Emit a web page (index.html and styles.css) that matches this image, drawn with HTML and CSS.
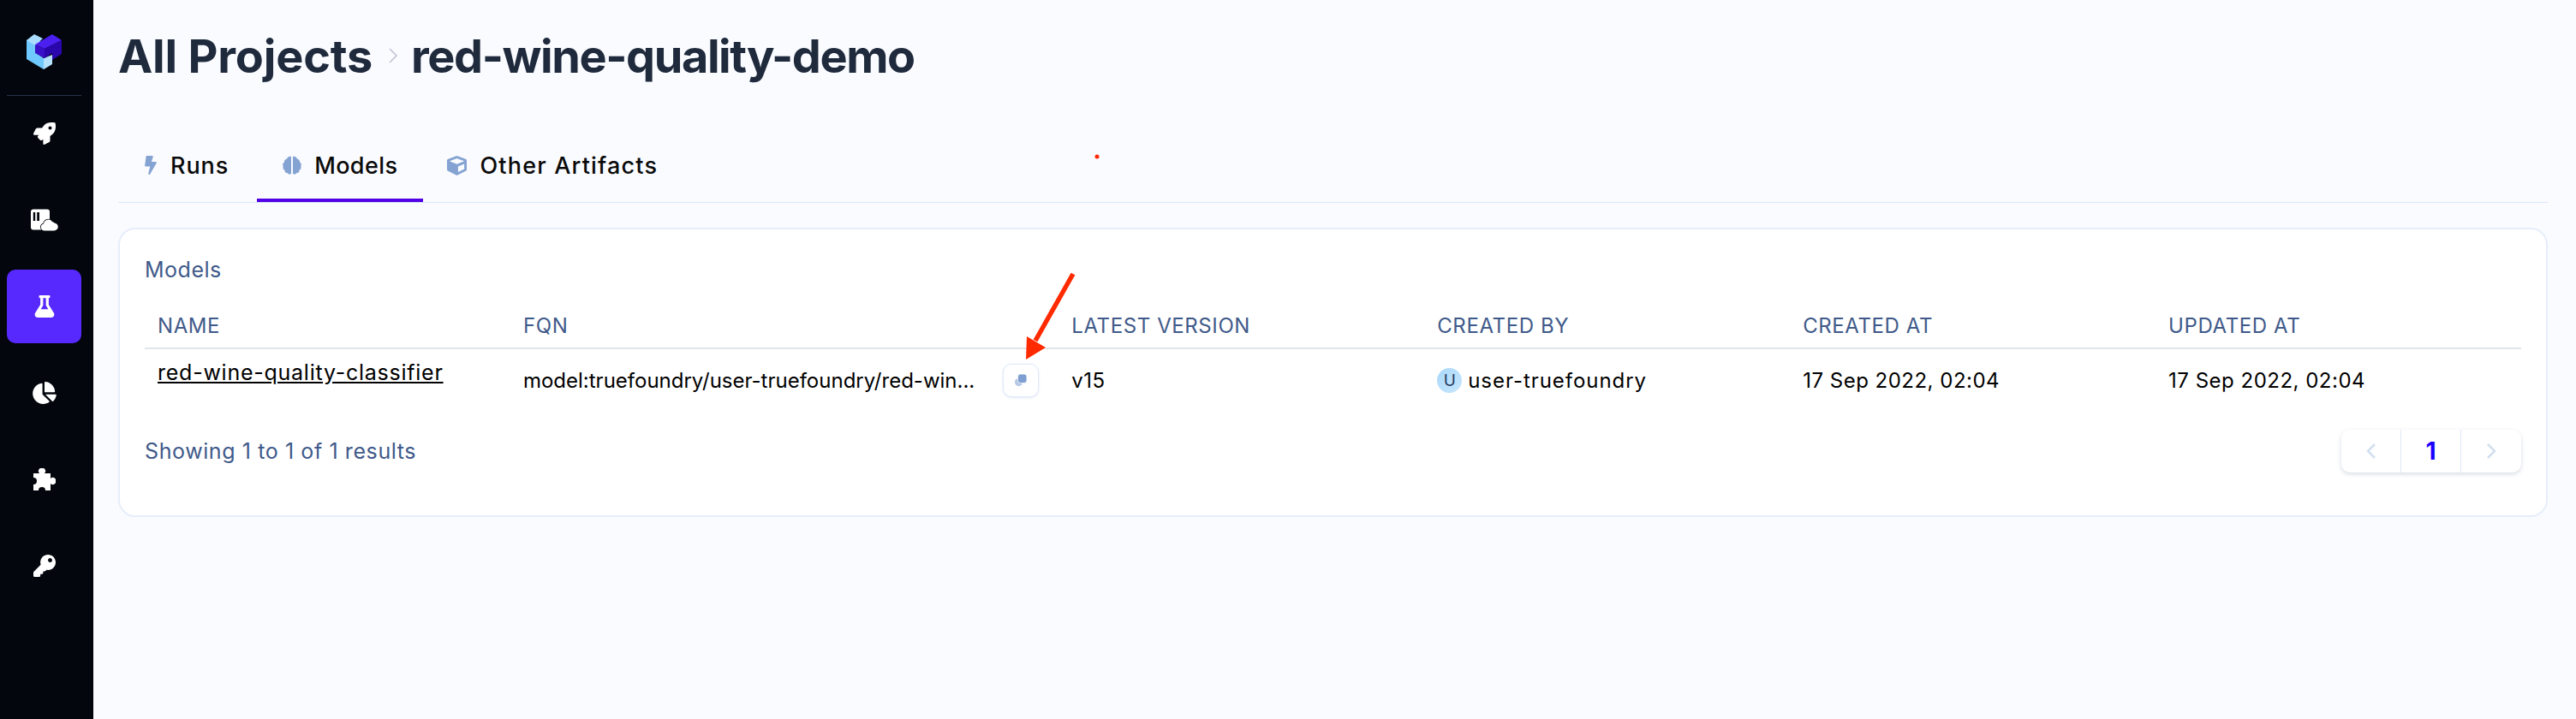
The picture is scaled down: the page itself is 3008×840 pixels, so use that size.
FILE: index.html
```html
<!DOCTYPE html>
<html lang="en">
<head>
  <meta charset="UTF-8">
  <title>red-wine-quality-demo | Models</title>
  <link rel="stylesheet" href="styles.css">
</head>
<body>
  <nav class="side-nav">
    <div class="side-logo">
      <svg width="41" height="41" viewBox="0 0 41 41">
        <path fill="#6fc8ff" d="M0 7 L0 29 L20 41 L20 28 L10 21 L10 14 L18 10 L10 3 Z"/>
        <path fill="#a9dcff" d="M0 7 L9 0 L19 5 L10 13 Z"/>
        <path fill="#b5e2ff" d="M20 28 L20 41 L30 35 L30 24 Z"/>
        <path fill="#4a1ff0" d="M10 12 L30 0 L41 7 L21 17 Z"/>
        <path fill="#3810c8" d="M10 12 L21 17 L21 28 L10 22 Z"/>
        <path fill="#2a06ad" d="M21 17 L41 7 L41 23 L30 30 L30 22 L21 28 Z"/>
      </svg>
    </div>
    <div class="side-divider"></div>
    <ul class="side-items">
      <li class="side-item">
        <svg class="side-icon" viewBox="0 0 512 512"><path d="M505.12 19.09c-1.19-5.53-6.66-11-12.21-12.19C460.72 0 435.51 0 410.41 0 307.18 0 245.27 55.2 199.05 128H94.84c-16.35.02-35.56 11.88-42.89 26.48L2.52 253.3A28.4 28.4 0 0 0 0 264a24 24 0 0 0 24 24h103.81l-22.47 22.47c-11.37 11.36-13 32.26 0 45.25l50.9 50.9c11.16 11.19 32.16 13.16 45.28 0l22.47-22.47V488a24 24 0 0 0 24.01 24 28.56 28.56 0 0 0 10.7-2.52l98.73-49.39c14.63-7.3 26.51-26.5 26.51-42.86V312.8c72.6-46.31 128.03-108.41 128.03-211.1.02-25.2.02-50.4-6.94-82.61zM384.04 168a40 40 0 1 1 40.01-40 40.02 40.02 0 0 1-40.01 40z"/></svg>
      </li>
      <li class="side-item">
        <svg class="side-icon side-icon-wide" viewBox="0 0 32 25">
          <path fill-rule="evenodd" d="M3 0h16a3 3 0 0 1 3 3v18a3 3 0 0 1-3 3H3a3 3 0 0 1-3-3V3a3 3 0 0 1 3-3zM2.800 3.500v10h2.400v-10zM7.200 3.500v10h2.800v-10z"/>
          <path class="cloud" d="M16 25a4 4 0 0 1-1-7.900A5.500 5.500 0 0 1 25 14.500a4.500 4.500 0 0 1 2.500 1.500A4.500 4.500 0 0 1 27 25z"/>
        </svg>
      </li>
      <li class="side-item is-active">
        <svg class="side-icon" viewBox="0 0 448 512"><path d="M437.2 403.5L320 215V64h8c13.3 0 24-10.7 24-24V24c0-13.3-10.7-24-24-24H120c-13.3 0-24 10.700-24 24v16c0 13.3 10.700 24 24 24h8v151L10.800 403.500C-18.500 450.600 15.300 512 70.900 512h306.200c55.700 0 89.400-61.500 60.100-108.500zM137.900 320l48.200-77.600c3.700-5.200 5.800-11.600 5.800-18.400V64h64v160c0 6.900 2.200 13.200 5.800 18.400l48.200 77.600h-172z"/></svg>
      </li>
      <li class="side-item">
        <svg class="side-icon side-icon-pie" viewBox="0 0 544 512"><path d="M527.79 288H290.5l158.03 158.03c6.04 6.04 15.98 6.53 22.19.68 38.7-36.46 65.32-85.61 73.13-140.86 1.34-9.46-6.51-17.85-16.06-17.85zm-15.83-64.8C503.72 103.74 408.26 8.28 288.8.04 279.68-.59 272 7.1 272 16.24V240h223.77c9.14 0 16.82-7.68 16.19-16.8zM224 288V50.71c0-9.55-8.39-17.4-17.84-16.06C86.99 51.49-4.1 155.6.14 280.37 4.5 408.51 114.83 513.59 243.03 511.98c50.4-.63 96.97-16.87 135.26-44.03 7.9-5.6 8.42-17.23 1.57-24.08L224 288z"/></svg>
      </li>
      <li class="side-item">
        <svg class="side-icon" viewBox="0 0 26 26"><path d="M0 6H7A4 4 0 1 1 13 6H20V12A4 4 0 1 1 20 18V26H14A4 4 0 1 0 6 26H0V19A4 4 0 1 0 0 11Z"/></svg>
      </li>
      <li class="side-item">
        <svg class="side-icon" viewBox="0 0 512 512"><path d="M512 176.001C512 273.203 433.202 352 336 352c-11.22 0-22.19-1.062-32.827-3.069l-24.012 27.014A23.999 23.999 0 0 1 261.223 384H224v40c0 13.255-10.745 24-24 24h-40v40c0 13.255-10.745 24-24 24H24c-13.255 0-24-10.745-24-24v-78.059c0-6.365 2.529-12.47 7.029-16.971l161.802-161.802C163.108 213.814 160 195.271 160 176 160 78.798 238.797.001 335.999 0 433.488-.001 512 78.511 512 176.001zM336 128c0 26.51 21.49 48 48 48s48-21.49 48-48-21.49-48-48-48-48 21.49-48 48z"/></svg>
      </li>
    </ul>
  </nav>

  <main class="content">
    <div class="crumbs">
      <h1>All Projects</h1>
      <svg class="crumb-sep" width="12" height="20" viewBox="0 0 12 20"><path d="M2 2l8 8-8 8" fill="none" stroke="#bcc3d0" stroke-width="1.500"/></svg>
      <h1 class="crumb-current">red-wine-quality-demo</h1>
    </div>

    <div class="tabs">
      <a class="tab tab-runs">
        <svg class="tab-icon" width="16" height="22" viewBox="0 0 320 512"><path d="M296 160H180.6l42.6-129.8C227.2 15 215.7 0 200 0H56C44 0 33.8 8.900 32.200 20.800l-32 240C-1.700 275.200 9.500 288 24 288h118.700L96.600 482.500c-3.600 15.200 8 29.500 23.300 29.500 8.400 0 16.400-4.400 20.800-12l176-304c9.300-15.900-2.200-36-20.700-36z"/></svg>
        Runs
      </a>
      <a class="tab is-current">
        <svg class="tab-icon" width="22" height="22" viewBox="0 0 22 22"><path d="M10 1v20c-1.500 1-3.600.7-4.400-1-1.900.2-3.300-1.300-3.100-3.200C.7 15.900-.2 13.800.8 12.300-.3 10.600.3 8.500 2 7.500 1.700 5.600 3 3.900 4.900 3.700 5.500 1.400 8.300.1 10 1z"/><path d="M12 1v20c1.500 1 3.600.7 4.400-1 1.900.2 3.300-1.300 3.100-3.200 1.800-.9 2.700-3 1.700-4.500 1.100-1.700.5-3.800-1.200-4.800.3-1.900-1-3.600-2.900-3.800C16.500 1.400 13.700.1 12 1z"/></svg>
        Models
      </a>
      <a class="tab tab-artifacts">
        <svg class="tab-icon" width="23" height="23" viewBox="0 0 512 512"><path d="M239.100 6.300l-208 78c-18.700 7-31.100 25-31.100 45v225.100c0 18.200 10.300 34.800 26.500 42.900l208 104c13.500 6.800 29.400 6.800 42.900 0l208-104c16.300-8.100 26.500-24.800 26.500-42.900V129.300c0-20-12.400-37.900-31.100-44.900l-208-78C262 2.200 250 2.200 239.100 6.300zM256 68.400l192 72v1.100l-192 78-192-78v-1.100l192-72zm32 356V275.500l160-65v133.900l-160 80z"/></svg>
        Other Artifacts
      </a>
    </div>

    <section class="card">
      <div class="card-title">Models</div>
      <div class="grid-row grid-head">
        <div class="cell">NAME</div>
        <div class="cell">FQN</div>
        <div class="cell">LATEST VERSION</div>
        <div class="cell">CREATED BY</div>
        <div class="cell">CREATED AT</div>
        <div class="cell">UPDATED AT</div>
      </div>
      <div class="grid-row grid-body">
        <div class="cell name-cell"><a class="model-link">red-wine-quality-classifier</a></div>
        <div class="cell fqn-cell">
          <span class="fqn-text">model:truefoundry/user-truefoundry/red-win...</span>
          <button class="copy-btn">
            <svg width="14" height="14" viewBox="0 0 14 14"><circle cx="4.500" cy="9.500" r="4.500" fill="#b4c7e4"/><rect x="3.500" y="0" width="10.500" height="10.500" rx="3" fill="#7f9fd2" stroke="#fff" stroke-width="0.800"/></svg>
          </button>
        </div>
        <div class="cell">v15</div>
        <div class="cell user-cell"><span class="avatar">U</span><span class="user-name">user-truefoundry</span></div>
        <div class="cell">17 Sep 2022, 02:04</div>
        <div class="cell">17 Sep 2022, 02:04</div>
      </div>
      <div class="card-foot">
        <span class="results">Showing 1 to 1 of 1 results</span>
        <div class="pager">
          <span class="pager-cell">
            <svg width="12" height="20" viewBox="0 0 12 20"><path d="M10 2l-8 8 8 8" fill="none" stroke="#d3dff0" stroke-width="2.500"/></svg>
          </span>
          <span class="pager-cell pager-num">1</span>
          <span class="pager-cell">
            <svg width="12" height="20" viewBox="0 0 12 20"><path d="M2 2l8 8-8 8" fill="none" stroke="#d3dff0" stroke-width="2.500"/></svg>
          </span>
        </div>
      </div>
    </section>
  </main>

  <!-- red annotation drawn over the page -->
  <svg class="annotation" width="3008" height="840" viewBox="0 0 3008 840">
    <circle cx="1281" cy="183" r="2.500" fill="#ff2a00"/>
    <path d="M1253 320 L1209 398" stroke="#ff2a00" stroke-width="5.500" fill="none"/>
    <path d="M1198 420 L1199 393 L1221 406 Z" fill="#ff2a00"/>
  </svg>
</body>
</html>
```

FILE: styles.css
```css
:root {
  --text-dark: #1f2a3c;
  --text-muted: #3f5a8a;
  --icon-blue: #84a3d3;
  --line-blue: #d5e5fa;
  --line-grey: #e1e4ea;
}
* {
  box-sizing: border-box;
}
body {
  margin: 0;
  width: 3008px;
  height: 840px;
  overflow: hidden;
  display: flex;
  background: #fafbff;
  color: #000;
  font-family: 'Inter', 'Liberation Sans', sans-serif;
}
.side-nav {
  width: 109px;
  flex-shrink: 0;
  background: #03060d;
  padding: 40px 14px 0 8px;
}
.side-logo {
  height: 41px;
  display: flex;
  justify-content: center;
}
.side-divider {
  height: 1px;
  margin-top: 30px;
  background: #26344a;
}
.side-items {
  list-style: none;
  margin: 1px 0 0 0;
  padding: 0;
  display: flex;
  flex-direction: column;
  gap: 15px;
}
.side-item {
  height: 86px;
  border-radius: 10px;
  display: flex;
  align-items: center;
  justify-content: center;
}
.side-item.is-active {
  background: #5729ff;
}
.side-icon {
  width: 26px;
  height: 26px;
  fill: #fff;
}
.side-icon-wide {
  width: 32px;
}
.side-icon-pie {
  width: 28px;
}
.cloud {
  stroke: #03060d;
  stroke-width: 1.6px;
  paint-order: stroke;
}
.content {
  flex: 1;
  min-width: 0;
  padding: 0 33px 0 29px;
}
.crumbs {
  height: 130px;
  display: flex;
  align-items: center;
}
.crumbs h1 {
  margin: 0;
  font-size: 54px;
  font-weight: 700;
  letter-spacing: -0.2px;
  color: var(--text-dark);
}
.crumbs .crumb-current {
  letter-spacing: -1.4px;
}
.crumb-sep {
  margin: 0 15px 0 18px;
}
.tabs {
  height: 107px;
  padding-top: 34px;
  display: flex;
  border-bottom: 1px solid var(--line-blue);
}
.tab {
  height: 72px;
  padding: 0 30px 10px 30px;
  display: flex;
  align-items: center;
  gap: 15px;
  font-size: 27px;
  font-weight: 500;
  letter-spacing: 0.9px;
  color: #0a0a0a;
  border-bottom: 4px solid transparent;
}
.tab-runs {
  padding-right: 33px;
}
.tab.is-current {
  letter-spacing: 0.4px;
  border-bottom-color: #5200e6;
}
.tab-artifacts {
  padding-left: 28px;
  letter-spacing: 1.2px;
}
.tab-icon {
  fill: var(--icon-blue);
}
.card {
  margin-top: 29px;
  height: 338px;
  padding: 30px 29px 0 29px;
  background: #fff;
  border: 2px solid #e6eefa;
  border-radius: 20px;
}
.card-title {
  font-size: 25px;
  line-height: 34px;
  letter-spacing: 0.5px;
  color: var(--text-muted);
}
.grid-row {
  display: grid;
  grid-template-columns: 2fr 3fr 2fr 2fr 2fr 2fr;
}
.cell {
  padding: 0 15px;
}
.grid-head {
  margin-top: 26px;
  height: 50px;
  padding-bottom: 3px;
  align-items: center;
  border-bottom: 2px solid var(--line-grey);
  font-size: 24px;
  letter-spacing: 0.6px;
  color: var(--text-muted);
}
.grid-body {
  height: 72px;
  align-items: center;
  font-size: 24px;
  letter-spacing: 0.5px;
}
.name-cell {
  padding-bottom: 18px;
}
.model-link {
  font-size: 25px;
  letter-spacing: 0.75px;
  text-decoration: underline;
}
.fqn-cell {
  display: flex;
  align-items: center;
  justify-content: space-between;
  padding-right: 23px;
  letter-spacing: 0;
}
.copy-btn {
  width: 42px;
  height: 39px;
  padding: 0;
  background: #fff;
  border: 1.5px solid #dfeafa;
  border-radius: 10px;
  box-shadow: 0 1px 3px rgba(120, 150, 200, 0.2);
  display: flex;
  align-items: center;
  justify-content: center;
}
.user-cell {
  display: flex;
  align-items: center;
  gap: 7px;
}
.user-name {
  letter-spacing: 0.95px;
}
.avatar {
  width: 29px;
  height: 29px;
  border-radius: 50%;
  background: linear-gradient(135deg, #a9d8fa, #c7e6fc);
  color: #24385e;
  font-size: 19px;
  letter-spacing: 0;
  display: flex;
  align-items: center;
  justify-content: center;
}
.card-foot {
  margin-top: 22px;
  display: flex;
  align-items: center;
  justify-content: space-between;
}
.results {
  font-size: 25px;
  letter-spacing: 0.6px;
  color: var(--text-muted);
}
.pager {
  display: flex;
  height: 50px;
  background: #fff;
  border-radius: 10px;
  box-shadow: 0 2px 5px rgba(60, 80, 120, 0.2);
}
.pager-cell {
  width: 70px;
  display: flex;
  align-items: center;
  justify-content: center;
  border-right: 1.5px solid #e0e9f6;
}
.pager-cell:last-child {
  border-right: none;
}
.pager-num {
  font-size: 28px;
  font-weight: 700;
  color: #1a00ff;
}
.annotation {
  position: absolute;
  top: 0;
  left: 0;
  pointer-events: none;
}
```
